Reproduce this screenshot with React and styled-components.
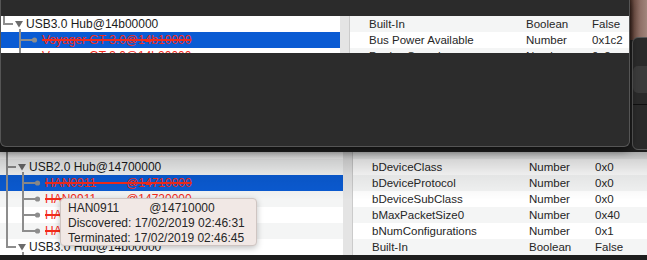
import React from "react";
import styled, { createGlobalStyle } from "styled-components";

const GlobalStyle = createGlobalStyle`
  html, body { margin: 0; padding: 0; background: #1e1e1e; }
  body { font-family: "Liberation Sans", Arial, sans-serif; }
`;

const BLUE = "#0a5bd3";
const RED = "#f42c1a";
const LINE = "#8d8d8d";

const Desktop = styled.div`
  position: relative;
  width: 647px;
  height: 260px;
  overflow: hidden;
  background: #1e1e1e;
`;

const Wallpaper = styled.div`
  position: absolute;
  left: 630px;
  top: 0;
  width: 17px;
  height: 40px;
  background: linear-gradient(90deg, #3a241d 0, #6e4f45 25%, #8f7067 60%, #a2867c 100%);
`;

const SideWindow = styled.div`
  position: absolute;
  left: 632px;
  top: 37px;
  width: 60px;
  height: 113px;
  box-sizing: border-box;
  background: #2a2a2a;
  border: 1px solid #5a5a5a;
  border-radius: 6px;
  display: flex;
  flex-direction: column;
  padding-top: 28px;
`;

const SideButton = styled.div`
  width: 40px;
  height: 27px;
  background: #3b3b3b;
  border-radius: 5px;
`;

const SideSeparator = styled.div`
  margin-top: 11px;
  height: 1px;
  background: #101010;
`;

const FrontWindow = styled.div`
  position: absolute;
  left: 0;
  top: 0;
  width: 630px;
  height: 147px;
  box-sizing: border-box;
  background: #2c2c2c;
  border: 1px solid #555555;
  border-top: none;
  border-radius: 0 0 6px 6px;
  display: flex;
  flex-direction: column;
  box-shadow: 0 3px 8px rgba(0, 0, 0, 0.55);
  z-index: 2;
`;

const FrontHeader = styled.div`
  height: 16px;
  flex-shrink: 0;
  background: #2b2b2b;
`;

const BackWindow = styled.div`
  position: absolute;
  left: 0;
  top: 152px;
  width: 700px;
  height: 103px;
  overflow: hidden;
  background: #ffffff;
  z-index: 1;
`;

const Pane = styled.div`
  display: flex;
  height: ${(p) => p.$h}px;
  margin-top: ${(p) => p.$shift || 0}px;
  overflow: hidden;
  flex-shrink: 0;
`;

const Tree = styled.div`
  width: ${(p) => p.$w}px;
  flex-shrink: 0;
  display: flex;
  flex-direction: column;
  background: #ffffff;
`;

const Splitter = styled.div`
  width: 9px;
  flex-shrink: 0;
  background: #e4e4e4;
  border-right: 1px solid #cbcbcb;
`;

const Table = styled.div`
  flex: 1;
  display: flex;
  flex-direction: column;
  background: #ffffff;
`;

const TreeRow = styled.div`
  display: flex;
  align-items: center;
  height: 16px;
  flex-shrink: 0;
  padding-left: ${(p) => p.$offset}px;
  background: ${(p) => (p.$selected ? BLUE : p.$alt ? "#f4f5f5" : "#ffffff")};
`;

const GuideSvg = styled.svg`
  flex-shrink: 0;
  display: block;
`;

const Label = styled.span`
  font-size: 12px;
  line-height: 16px;
  white-space: pre;
  color: ${(p) => (p.$struck ? RED : "#1b1b1b")};
  text-decoration: ${(p) => (p.$struck ? "line-through" : "none")};
  text-decoration-thickness: 1.5px;
`;

const PropRow = styled.div`
  display: grid;
  grid-template-columns: 157px 66px 1fr;
  height: 16px;
  flex-shrink: 0;
  padding-left: 19px;
  align-items: center;
  font-size: 11.5px;
  line-height: 16px;
  color: #262626;
  white-space: nowrap;
  background: ${(p) => (p.$alt ? "#f4f5f5" : "#ffffff")};
`;

const Cell = styled.span`
  overflow: hidden;
`;

const Shade = styled.div`
  position: absolute;
  left: 0;
  right: 0;
  top: 0;
  height: 48px;
  pointer-events: none;
  background: linear-gradient(
    to bottom,
    rgba(0, 0, 0, 0.3) 0,
    rgba(0, 0, 0, 0.16) 8px,
    rgba(0, 0, 0, 0.07) 22px,
    rgba(0, 0, 0, 0) 48px
  );
`;

const Tooltip = styled.div`
  position: absolute;
  left: 60px;
  top: 46px;
  width: 197px;
  height: 48px;
  box-sizing: border-box;
  padding: 2px 0 0 7px;
  background: #f1e8e5;
  border: 1px solid #cfc5c2;
  border-radius: 4px;
  box-shadow: 0 2px 6px rgba(0, 0, 0, 0.25);
  font-size: 12px;
  line-height: 15px;
  color: #262626;
  white-space: pre;
  z-index: 3;
`;

const TipLine = styled.div``;

function Guide({ level, last, expanded, ancestor, empty }) {
  const w = level === 0 ? 23 : 39;
  const s = { stroke: LINE, strokeWidth: 2 };
  if (empty) {
    return (
      <GuideSvg width={w} height={16} viewBox={`0 0 ${w} 16`}>
        <line x1={1} y1={0} x2={1} y2={16} {...s} />
      </GuideSvg>
    );
  }
  return (
    <GuideSvg width={w} height={16} viewBox={`0 0 ${w} 16`}>
      {level === 0 ? (
        <>
          <line x1={1} y1={0} x2={1} y2={last ? 9 : 16} {...s} />
          <line x1={1} y1={8} x2={10} y2={8} {...s} />
          <polygon points="12,5 20,5 16,11.5" fill="#6b6b6b" />
          {expanded && <line x1={17} y1={13} x2={17} y2={16} {...s} />}
        </>
      ) : (
        <>
          {ancestor && <line x1={1} y1={0} x2={1} y2={16} {...s} />}
          <line x1={17} y1={0} x2={17} y2={last ? 9 : 16} {...s} />
          <line x1={17} y1={8} x2={30} y2={8} {...s} />
          <circle cx={31.5} cy={8} r={2.6} fill={LINE} />
        </>
      )}
    </GuideSvg>
  );
}

function TreeItem({ item, offset }) {
  return (
    <TreeRow $offset={offset} $selected={item.selected} $alt={item.alt}>
      <Guide
        level={item.level}
        last={item.last}
        expanded={item.expanded}
        ancestor={item.ancestor}
        empty={item.empty}
      />
      {item.text && <Label $struck={item.struck}>{item.text}</Label>}
    </TreeRow>
  );
}

const GAP = "         ";

const frontTree = [
  { level: 0, last: true, expanded: true, text: "USB3.0 Hub@14b00000", alt: false },
  { level: 1, text: "Voyager GT 3.0@14b10000", struck: true, selected: true, alt: true },
  { level: 1, text: "Voyager GT 3.0@14b20000", struck: true, alt: false },
];

const frontProps = [
  ["Built-In", "Boolean", "False", true],
  ["Bus Power Available", "Number", "0x1c2", false],
  ["Device Speed", "Number", "0x2", true],
];

const backTree = [
  { level: 0, empty: true, alt: false },
  { level: 0, expanded: true, text: "USB2.0 Hub@14700000", alt: true },
  { level: 1, ancestor: true, text: `HAN0911${GAP}@14710000`, struck: true, selected: true, alt: false },
  { level: 1, ancestor: true, text: `HAN0911${GAP}@14720000`, struck: true, alt: true },
  { level: 1, ancestor: true, text: `HAN0911${GAP}@14730000`, struck: true, alt: false },
  { level: 1, ancestor: true, last: true, text: `HAN0911${GAP}@14740000`, struck: true, alt: true },
  { level: 0, last: true, expanded: true, text: "USB3.0 Hub@14b00000", alt: false },
];

const backProps = [
  ["", "", "", true],
  ["bDeviceClass", "Number", "0x0", false],
  ["bDeviceProtocol", "Number", "0x0", true],
  ["bDeviceSubClass", "Number", "0x0", false],
  ["bMaxPacketSize0", "Number", "0x40", true],
  ["bNumConfigurations", "Number", "0x1", false],
  ["Built-In", "Boolean", "False", true],
];

function PropTable({ rows }) {
  return (
    <Table>
      {rows.map(([n, t, v, alt], i) => (
        <PropRow key={i} $alt={alt}>
          <Cell>{n}</Cell>
          <Cell>{t}</Cell>
          <Cell>{v}</Cell>
        </PropRow>
      ))}
    </Table>
  );
}

export default function App() {
  return (
    <>
      <GlobalStyle />
      <Desktop>
        <Wallpaper />
        <SideWindow>
          <SideButton />
          <SideSeparator />
        </SideWindow>

        <FrontWindow>
          <FrontHeader />
          <Pane $h={37}>
            <Tree $w={339}>
              {frontTree.map((it, i) => (
                <TreeItem key={i} item={it} offset={2} />
              ))}
            </Tree>
            <Splitter />
            <PropTable rows={frontProps} />
          </Pane>
        </FrontWindow>

        <BackWindow>
          <Pane $h={112} $shift={-9}>
            <Tree $w={343}>
              {backTree.map((it, i) => (
                <TreeItem key={i} item={it} offset={6} />
              ))}
            </Tree>
            <Splitter />
            <PropTable rows={backProps} />
          </Pane>
          <Shade />
          <Tooltip>
            <TipLine>{`HAN0911${GAP}@14710000`}</TipLine>
            <TipLine>Discovered: 17/02/2019 02:46:31</TipLine>
            <TipLine>Terminated: 17/02/2019 02:46:45</TipLine>
          </Tooltip>
        </BackWindow>
      </Desktop>
    </>
  );
}
